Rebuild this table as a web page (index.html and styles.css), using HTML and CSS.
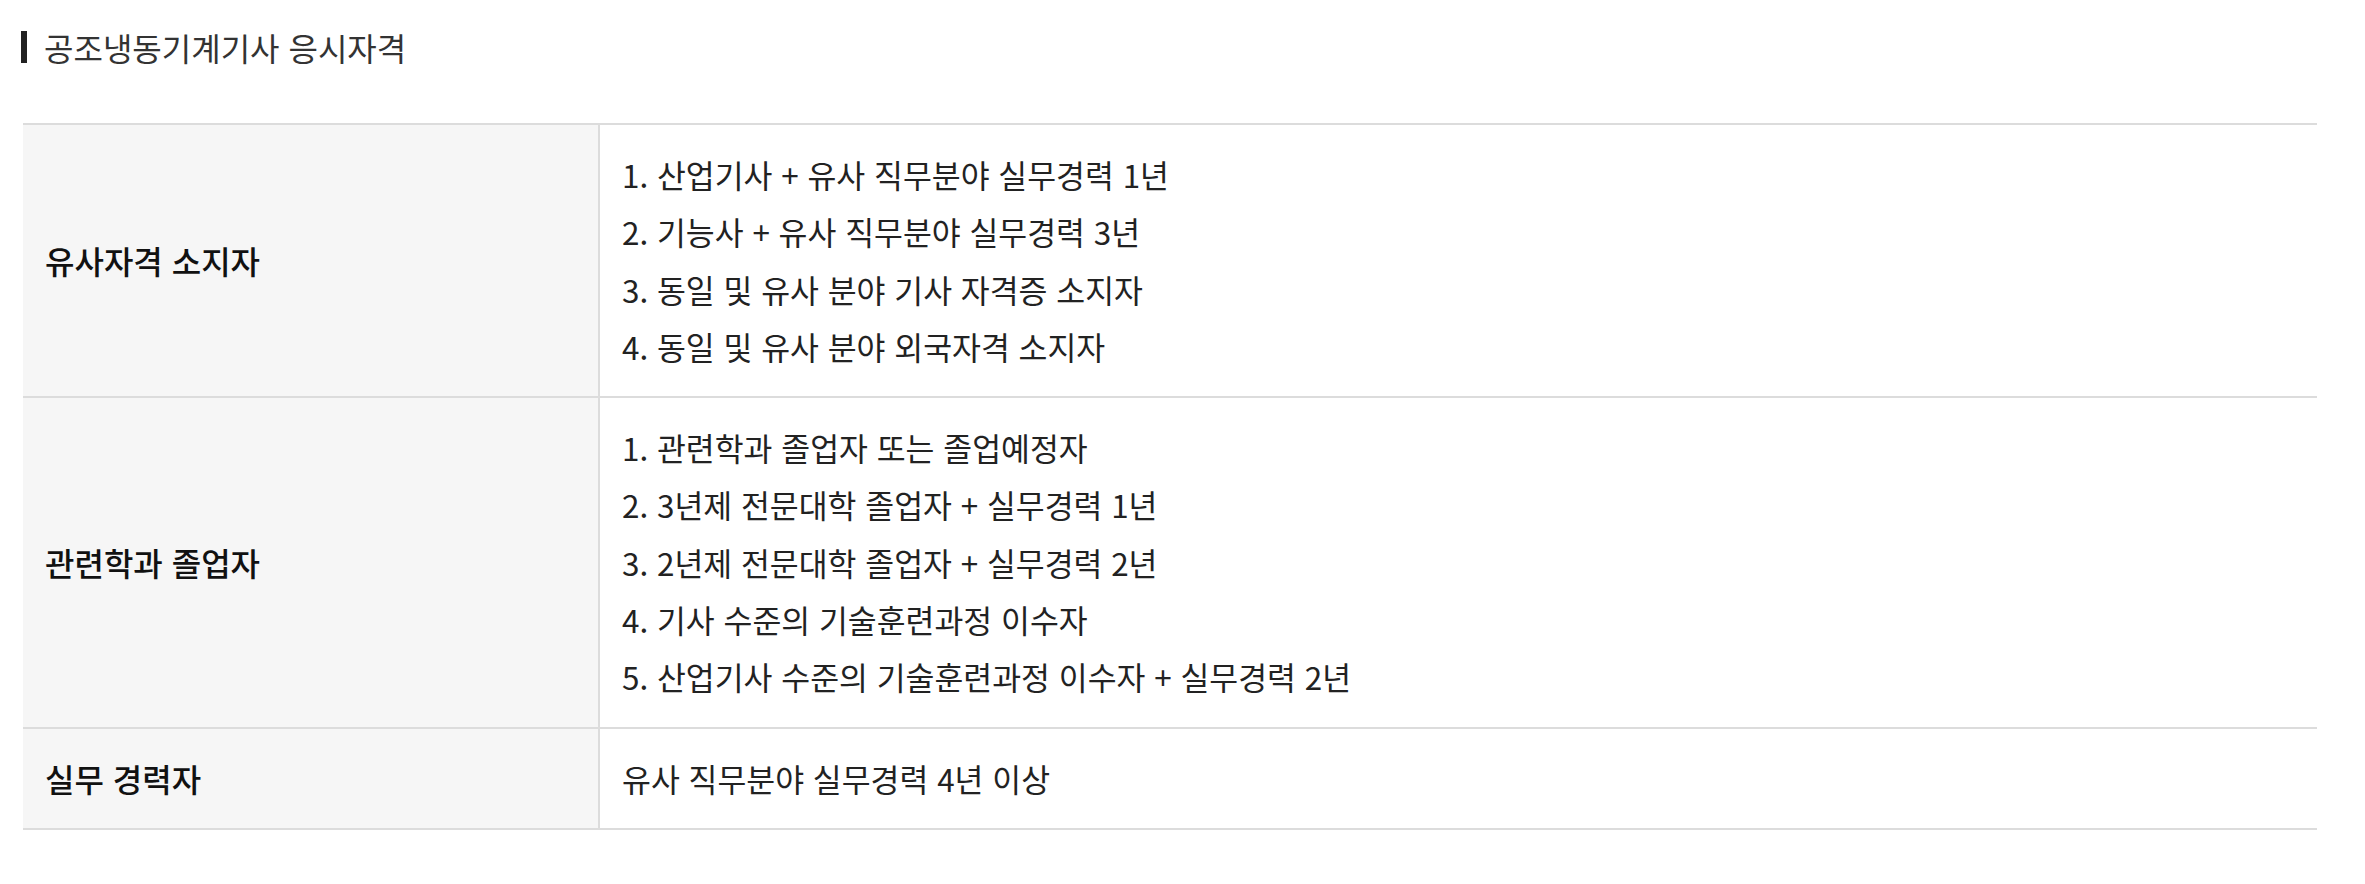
FILE: index.html
```html
<!DOCTYPE html>
<html lang="ko">
<head>
<meta charset="utf-8">
<title>공조냉동기계기사 응시자격</title>
<link rel="stylesheet" href="styles.css">
</head>
<body>
<section class="qual">
  <h3 class="qual-title">공조냉동기계기사 응시자격</h3>
  <table class="qual-table">
    <colgroup>
      <col class="col-head">
      <col>
    </colgroup>
    <tbody>
      <tr>
        <th>유사자격 소지자</th>
        <td>
          <ul class="lines">
            <li>1. 산업기사 + 유사 직무분야 실무경력 1년</li>
            <li>2. 기능사 + 유사 직무분야 실무경력 3년</li>
            <li>3. 동일 및 유사 분야 기사 자격증 소지자</li>
            <li>4. 동일 및 유사 분야 외국자격 소지자</li>
          </ul>
        </td>
      </tr>
      <tr>
        <th>관련학과 졸업자</th>
        <td>
          <ul class="lines">
            <li>1. 관련학과 졸업자 또는 졸업예정자</li>
            <li>2. 3년제 전문대학 졸업자 + 실무경력 1년</li>
            <li>3. 2년제 전문대학 졸업자 + 실무경력 2년</li>
            <li>4. 기사 수준의 기술훈련과정 이수자</li>
            <li>5. 산업기사 수준의 기술훈련과정 이수자 + 실무경력 2년</li>
          </ul>
        </td>
      </tr>
      <tr>
        <th>실무 경력자</th>
        <td>
          <ul class="lines">
            <li>유사 직무분야 실무경력 4년 이상</li>
          </ul>
        </td>
      </tr>
    </tbody>
  </table>
</section>
</body>
</html>
```
FILE: styles.css
```css
html, body {
  margin: 0;
  padding: 0;
  background: #ffffff;
}

body {
  font-family: "Noto Sans CJK KR", "Noto Sans", sans-serif;
  color: #222222;
}

.qual {
  padding: 31px 48px 0 21px;
}

.qual-title {
  margin: 0;
  border-left: 6px solid #222222;
  padding-left: 17px;
  font-size: 32px;
  font-weight: 400;
  line-height: 32px;
  color: #333333;
}

.qual-table {
  margin: 60px 0 0 2px;
  width: calc(100% - 2px);
  table-layout: fixed;
  border-collapse: separate;
  border-spacing: 0;
  border-top: 2px solid #dcdcdc;
}

.col-head {
  width: 577px;
}

.qual-table th,
.qual-table td {
  padding: 21px 22px;
  border-bottom: 2px solid #dcdcdc;
  line-height: 57.3px;
  vertical-align: middle;
  text-align: left;
}

.qual-table th {
  background: #f6f6f6;
  border-right: 2px solid #dcdcdc;
  font-size: 32px;
  font-weight: 500;
  color: #111111;
}

.qual-table td {
  font-size: 31.4px;
  font-weight: 400;
  color: #222222;
}

.lines {
  list-style: none;
  margin: 0;
  padding: 0;
}
```
